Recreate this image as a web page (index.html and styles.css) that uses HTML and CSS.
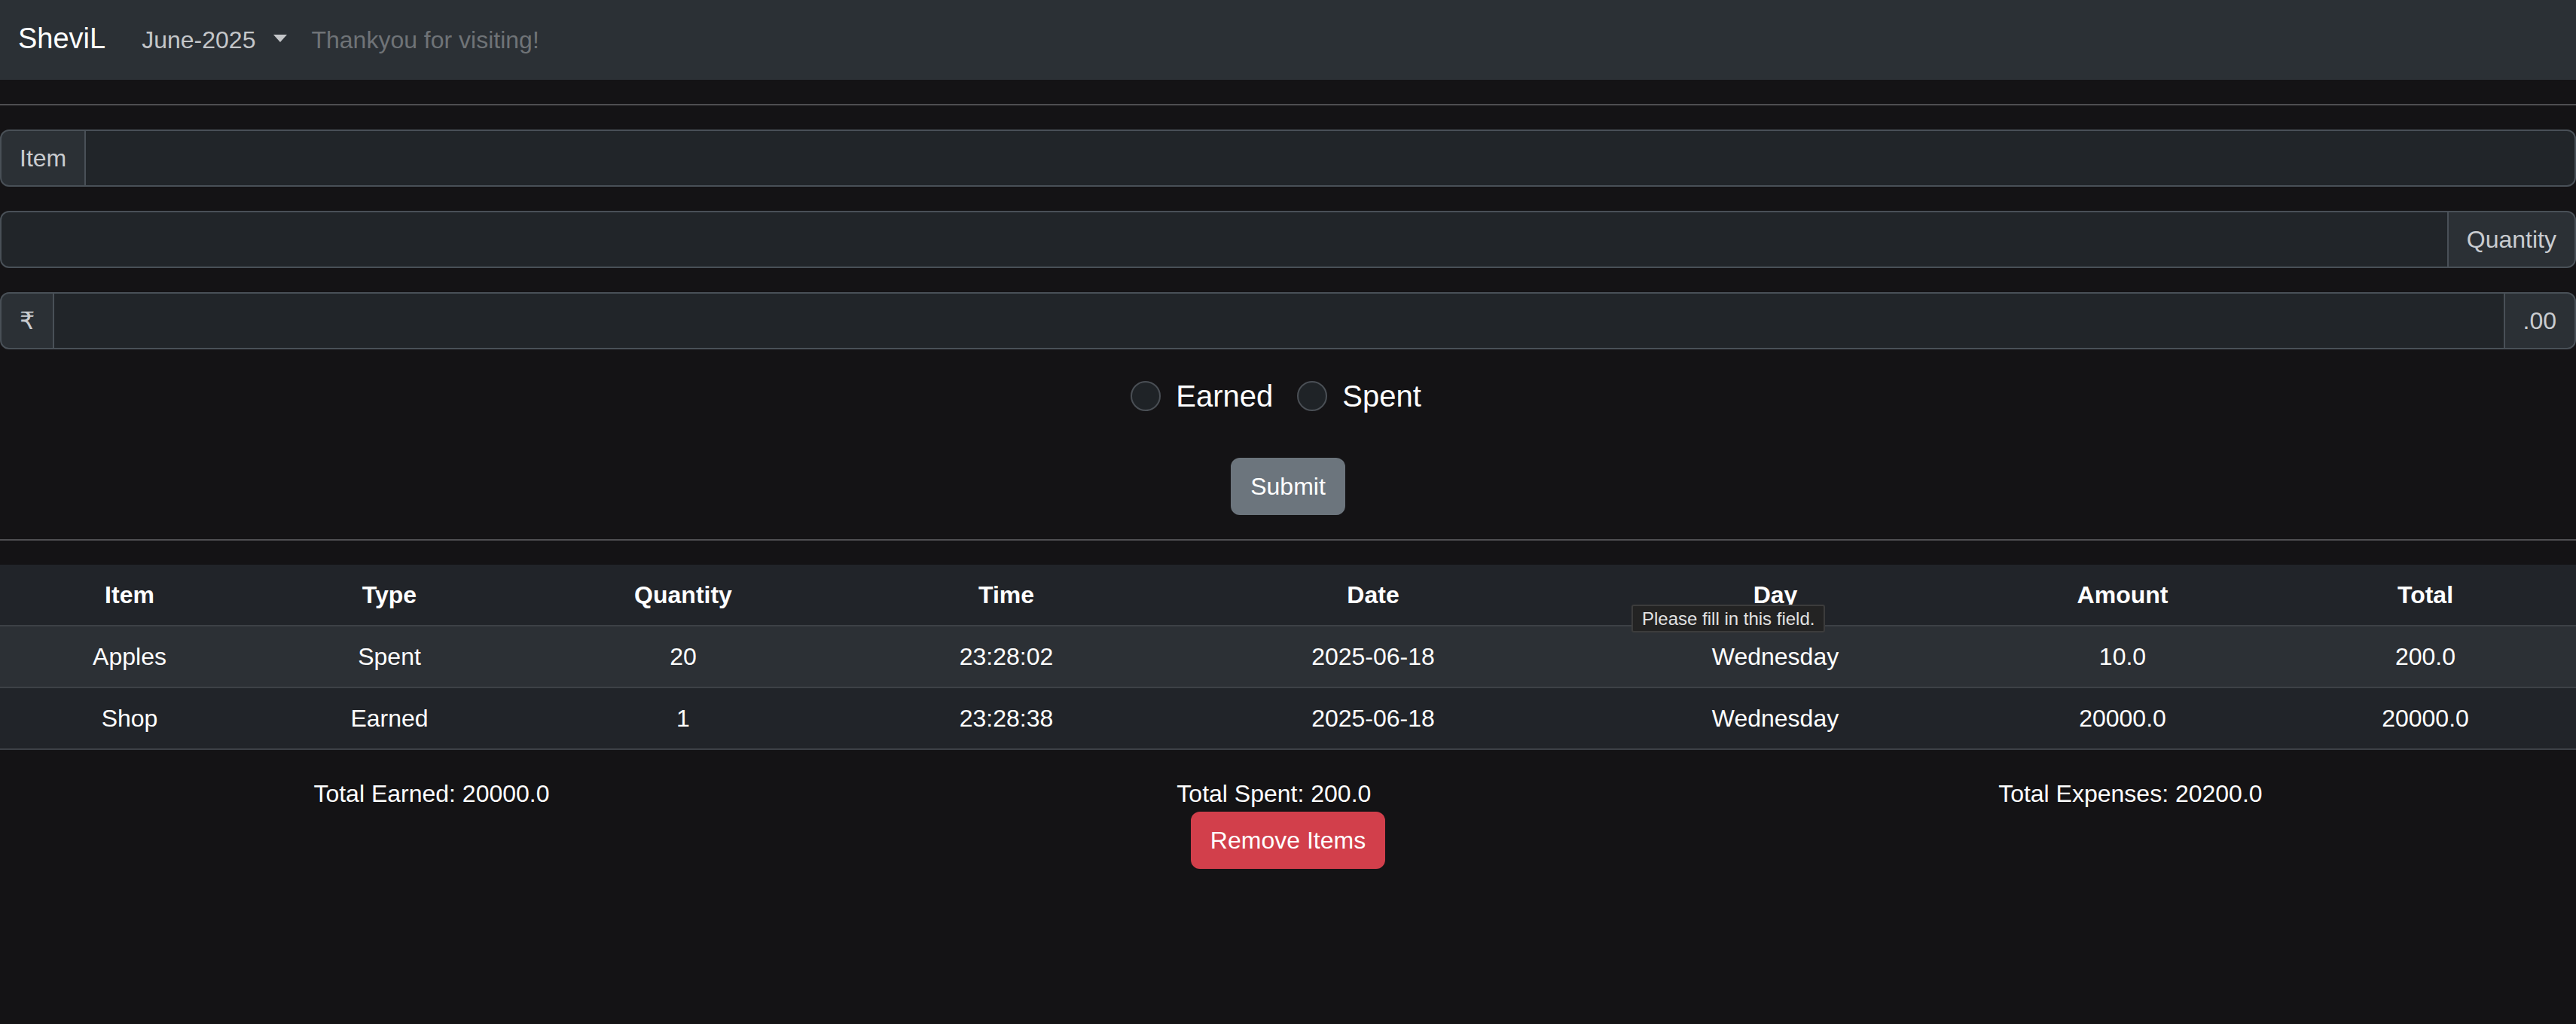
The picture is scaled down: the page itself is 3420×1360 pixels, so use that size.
FILE: index.html
```html
<!DOCTYPE html>
<html lang="en">
<head>
<meta charset="utf-8">
<title>SheviL</title>
<link rel="stylesheet" href="styles.css">
</head>
<body>
<nav class="navbar">
  <a class="brand" href="#">SheviL</a>
  <ul class="nav">
    <li><a class="nav-link" href="#">June-2025<span class="caret"></span></a></li>
    <li><span class="nav-text">Thankyou for visiting!</span></li>
  </ul>
</nav>
<hr class="rule">
<form class="entry">
  <div class="input-group">
    <span class="addon">Item</span>
    <input class="field" type="text">
  </div>
  <div class="input-group">
    <input class="field" type="text">
    <span class="addon">Quantity</span>
  </div>
  <div class="input-group">
    <span class="addon">₹</span>
    <input class="field" type="text">
    <span class="addon">.00</span>
  </div>
  <div class="type-choice">
    <label class="check"><input class="radio" type="radio" name="type">Earned</label>
    <label class="check"><input class="radio" type="radio" name="type">Spent</label>
  </div>
  <div class="submit-row">
    <button class="btn btn-secondary" type="button">Submit</button>
  </div>
</form>
<hr class="rule">
<div class="table-wrap">
  <table class="ledger">
    <colgroup>
      <col class="c-item"><col class="c-type"><col class="c-qty"><col class="c-time">
      <col class="c-date"><col class="c-day"><col class="c-amount"><col class="c-total">
    </colgroup>
    <thead>
      <tr><th>Item</th><th>Type</th><th>Quantity</th><th>Time</th><th>Date</th><th>Day</th><th>Amount</th><th>Total</th></tr>
    </thead>
    <tbody>
      <tr><td>Apples</td><td>Spent</td><td>20</td><td>23:28:02</td><td>2025-06-18</td><td>Wednesday</td><td>10.0</td><td>200.0</td></tr>
      <tr><td>Shop</td><td>Earned</td><td>1</td><td>23:28:38</td><td>2025-06-18</td><td>Wednesday</td><td>20000.0</td><td>20000.0</td></tr>
    </tbody>
  </table>
  <div class="bubble">Please fill in this field.</div>
</div>
<div class="totals">
  <span>Total Earned: 20000.0</span>
  <span>Total Spent: 200.0</span>
  <span>Total Expenses: 20200.0</span>
</div>
<div class="remove-row">
  <button class="btn btn-danger" type="button">Remove Items</button>
</div>
</body>
</html>
```

FILE: styles.css
```css
html, body {
  margin: 0;
  padding: 0;
  background: #141315;
  color: #dee2e6;
  font-family: "Liberation Sans", Arial, "DejaVu Sans", sans-serif;
  font-size: 32px;
  line-height: 1.5;
}

.navbar {
  box-sizing: border-box;
  height: 106px;
  background: #2b3035;
  display: flex;
  align-items: center;
  padding: 0 24px;
}

.brand {
  font-size: 38px;
  line-height: 60px;
  color: #ffffff;
  text-decoration: none;
  margin-right: 32px;
  margin-top: -4px;
}

.nav {
  display: flex;
  align-items: center;
  list-style: none;
  margin: 0;
  padding: 0;
}

.nav-link {
  display: flex;
  align-items: center;
  padding: 16px;
  color: #c4c6c9;
  text-decoration: none;
}

.caret {
  display: inline-block;
  margin-left: 24px;
  margin-top: -4px;
  border-top: 10px solid #c4c6c9;
  border-left: 9px solid transparent;
  border-right: 9px solid transparent;
}

.nav-text {
  display: block;
  padding: 16px;
  color: #6f7377;
}

.rule {
  margin: 32px 0;
  height: 0;
  border: 0;
  border-top: 2px solid #4e4e51;
}

.input-group {
  display: flex;
  margin-bottom: 32px;
}

.addon {
  box-sizing: border-box;
  height: 76px;
  display: flex;
  align-items: center;
  padding: 0 24px;
  background: #2b3035;
  border: 2px solid #495057;
  color: #c9ccd0;
  white-space: nowrap;
}

.field {
  flex: 1;
  min-width: 0;
  box-sizing: border-box;
  height: 76px;
  margin: 0;
  padding: 12px 24px;
  background: #212529;
  border: 2px solid #495057;
  color: #dee2e6;
  font: inherit;
  outline: none;
}

.input-group > * + * {
  margin-left: -2px;
}

.input-group > :first-child {
  border-radius: 12px 0 0 12px;
}

.input-group > :last-child {
  border-radius: 0 12px 12px 0;
}

.type-choice {
  display: flex;
  justify-content: center;
  font-size: 40px;
  line-height: 60px;
  color: #ffffff;
  margin-top: 2px;
  margin-bottom: 52px;
}

.check {
  display: flex;
  align-items: center;
  margin-right: 32px;
}

.radio {
  -webkit-appearance: none;
  appearance: none;
  box-sizing: border-box;
  width: 40px;
  height: 40px;
  margin: 0 20px 0 0;
  border-radius: 50%;
  border: 2px solid #4a4f55;
  background: #1f2327;
}

.submit-row,
.remove-row {
  display: flex;
  justify-content: center;
}

.btn {
  font: inherit;
  font-size: 32px;
  line-height: 48px;
  padding: 12px 24px;
  border: 2px solid transparent;
  border-radius: 12px;
  color: #ffffff;
  cursor: pointer;
}

.btn-secondary {
  background: #6c757d;
  border-color: #6c757d;
}

.btn-danger {
  background: #d23f4b;
  border-color: #d23f4b;
}

.table-wrap {
  position: relative;
}

.ledger {
  width: 100%;
  table-layout: fixed;
  border-collapse: collapse;
  margin-bottom: 34px;
  color: #ffffff;
  text-align: center;
}

.c-item { width: 344px; }
.c-type { width: 346px; }
.c-qty { width: 434px; }
.c-time { width: 424px; }
.c-date { width: 550px; }
.c-day { width: 518px; }
.c-amount { width: 404px; }
.c-total { width: 400px; }

.ledger th,
.ledger td {
  padding: 16px;
  line-height: 48px;
  border-bottom: 2px solid #3d4146;
}

.ledger th {
  font-weight: bold;
}

.ledger thead tr {
  background: #212429;
}

.ledger tbody tr:nth-child(odd) {
  background: #2c3035;
}

.ledger tbody tr:nth-child(even) {
  background: #212429;
}

.bubble {
  position: absolute;
  top: 53px;
  left: 2166px;
  padding: 0 12px;
  font-size: 24px;
  line-height: 33px;
  color: #e2e2e2;
  background: #232323;
  border: 2px solid #3c3c3c;
  border-radius: 3px;
  white-space: nowrap;
}

.totals {
  display: flex;
  justify-content: space-around;
  color: #ffffff;
  line-height: 48px;
}
```
